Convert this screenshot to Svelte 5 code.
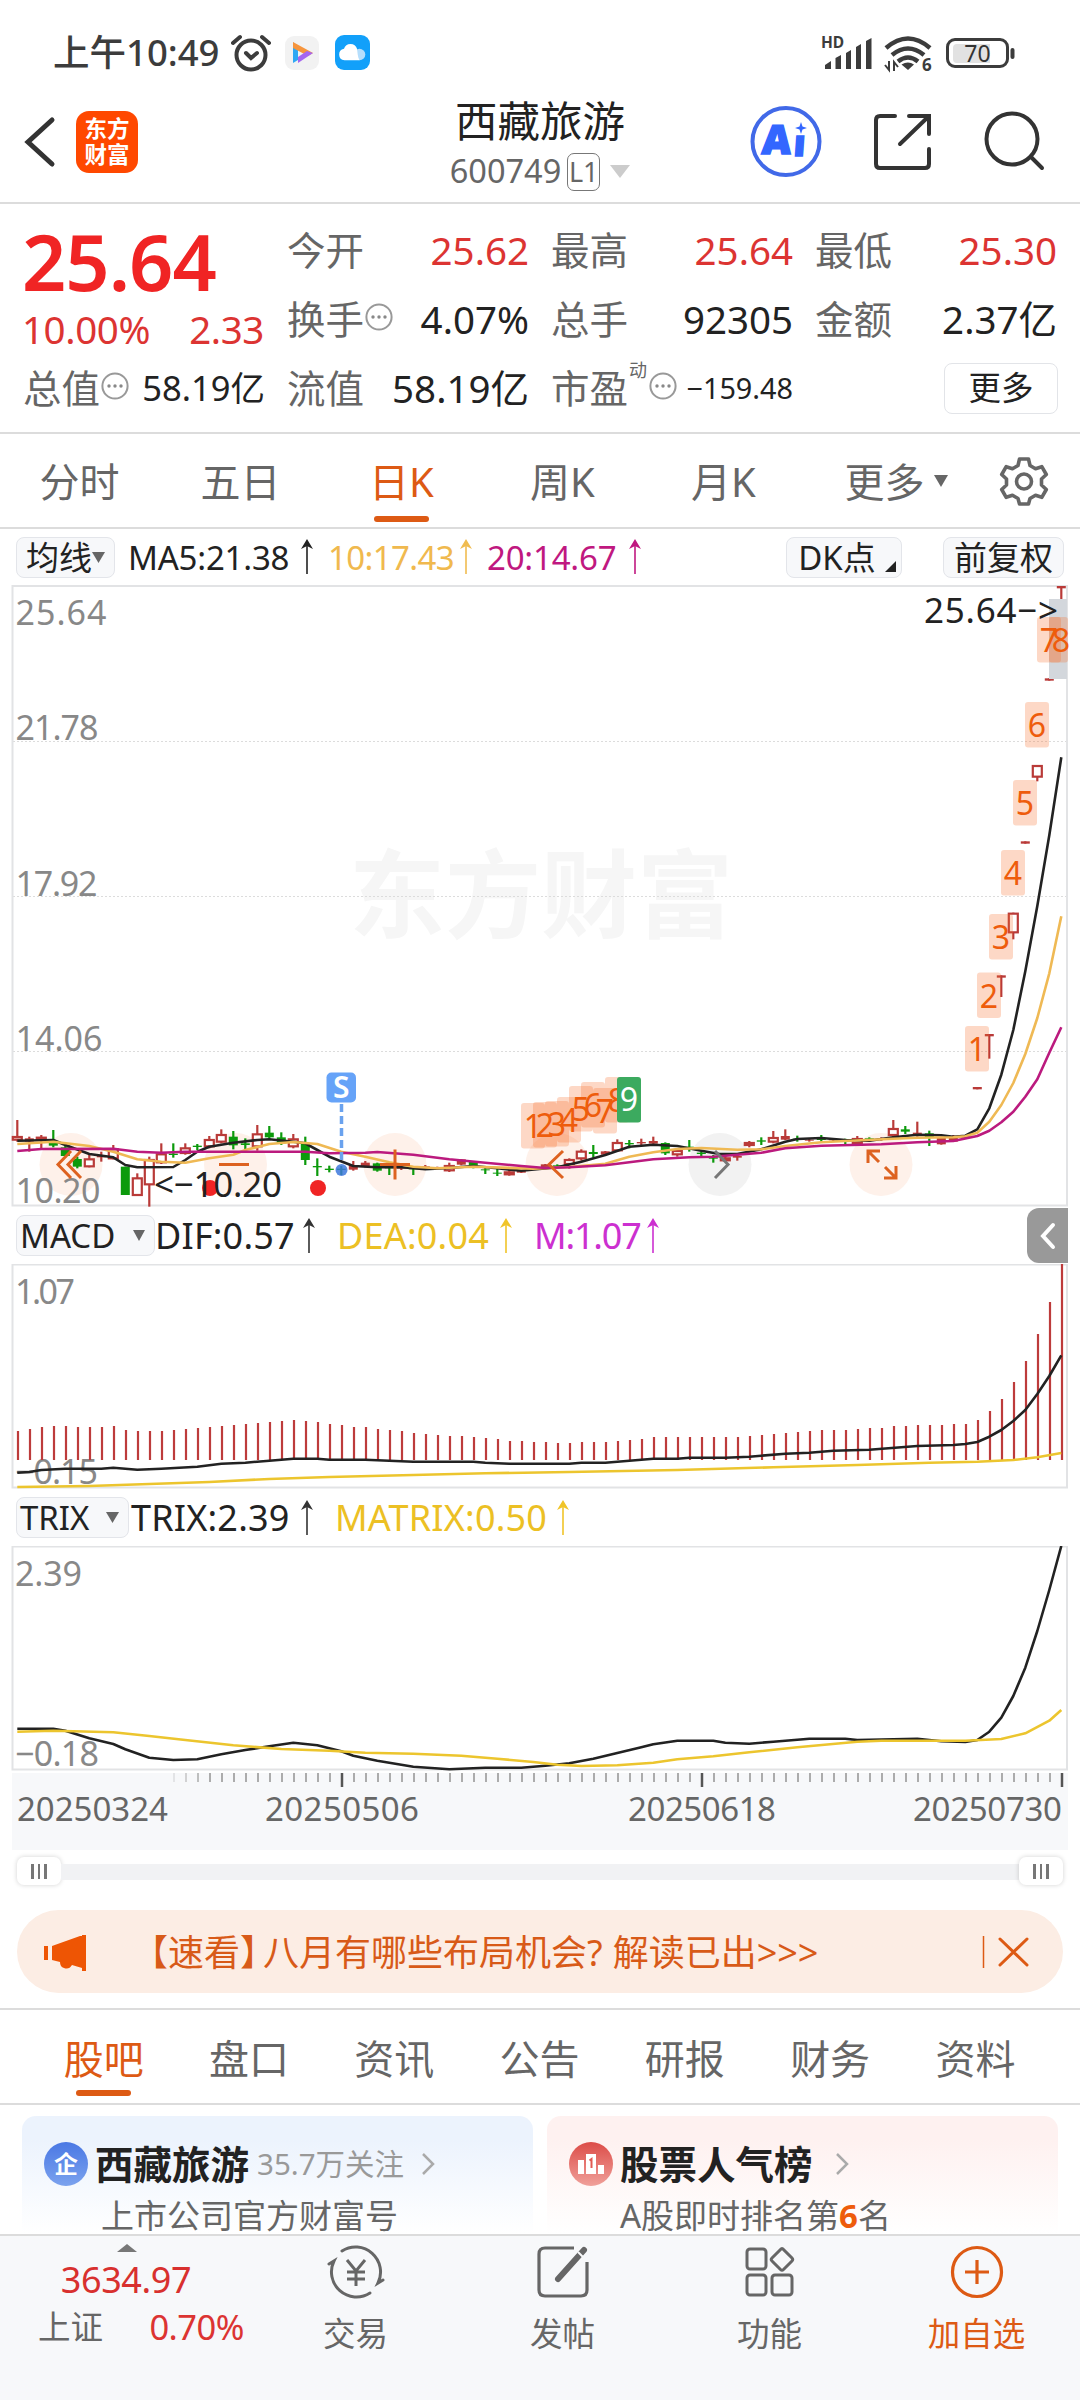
<script>
	const tabs = ["分时", "五日", "日K", "周K", "月K"];
	const infoTabs = ["股吧", "盘口", "资讯", "公告", "研报", "财务", "资料"];

	const quotes = [
		{ label: "今开", value: "25.62", up: true },
		{ label: "最高", value: "25.64", up: true },
		{ label: "最低", value: "25.30", up: true },
		{ label: "换手", value: "4.07%", tip: true },
		{ label: "总手", value: "92305" },
		{ label: "金额", value: "2.37亿" },
	];

	// one bar every 12px
	const bx = (i) => 17.3 + i * 12;
	const line = (pts, fy) => pts.map(([i, v]) => `${bx(i).toFixed(1)},${fy(v).toFixed(1)}`).join(" ");

	const ky = (v) => 1060 + v / 3;
	const macdY = (v) => 1200 + v / 3;
	const trixY = (v) => 1490 + v / 3;

	// [index, kind, high, top, bottom, low]  r = hollow red, R = solid red, g = green
	const candles = [
		[0, "r", 180, 228, 242, 245], [1, "R", 230, 235, 245, 275], [2, "r", 225, 230, 238, 265],
		[3, "g", 210, 247, 257, 262], [4, "g", 255, 262, 288, 292], [5, "g", 290, 297, 320, 325],
		[6, "r", 285, 295, 322, 322], [7, "R", 275, 288, 292, 305], [8, "r", 255, 265, 298, 298],
		[9, "g", 320, 320, 405, 405], [10, "r", 340, 352, 408, 408], [11, "r", 290, 297, 376, 440],
		[12, "r", 250, 280, 310, 312], [13, "g", 250, 281, 285, 293], [14, "r", 250, 262, 282, 284],
		[15, "g", 252, 257, 261, 270], [16, "r", 228, 237, 262, 265], [17, "r", 208, 222, 248, 250],
		[18, "g", 213, 230, 256, 268], [19, "g", 235, 250, 255, 270], [20, "r", 195, 220, 262, 272],
		[21, "g", 198, 218, 232, 240], [22, "g", 217, 232, 250, 255], [23, "r", 222, 235, 262, 265],
		[24, "g", 230, 250, 300, 315], [25, "g", 295, 318, 322, 348], [26, "g", 317, 326, 330, 337],
		[27, "g", 318, 326, 330, 345], [28, "R", 303, 315, 329, 332], [29, "R", 303, 308, 320, 322],
		[30, "g", 308, 310, 332, 335], [31, "g", 312, 318, 325, 345], [32, "R", 318, 322, 326, 330],
		[33, "g", 318, 325, 328, 345], [34, "R", 315, 319, 323, 330], [35, "R", 320, 324, 327, 328],
		[36, "r", 308, 315, 334, 336], [37, "R", 298, 298, 314, 316], [38, "g", 303, 305, 322, 325],
		[39, "g", 320, 328, 331, 342], [40, "g", 325, 338, 341, 348], [41, "r", 328, 334, 345, 347],
		[42, "R", 330, 333, 338, 339], [43, "R", 322, 325, 329, 330], [44, "R", 312, 313, 321, 322],
		[45, "g", 313, 316, 319, 320], [46, "r", 295, 297, 315, 326], [47, "r", 268, 272, 298, 302],
		[48, "g", 255, 276, 282, 293], [49, "R", 273, 274, 284, 288], [50, "r", 238, 246, 274, 276],
		[51, "g", 240, 249, 253, 265], [52, "R", 236, 246, 250, 258], [53, "R", 230, 243, 251, 252],
		[54, "g", 247, 249, 280, 285], [55, "r", 265, 270, 286, 290], [56, "g", 240, 260, 263, 275],
		[57, "g", 275, 278, 282, 288], [58, "g", 285, 292, 296, 308], [59, "r", 285, 292, 302, 305],
		[60, "R", 280, 288, 293, 302], [61, "r", 243, 246, 258, 262], [62, "g", 232, 241, 245, 255],
		[63, "r", 213, 231, 248, 250], [64, "R", 208, 228, 239, 240], [65, "g", 227, 236, 239, 245],
		[66, "R", 236, 239, 242, 245], [67, "g", 225, 237, 240, 245], [68, "R", 235, 238, 241, 243],
		[69, "g", 236, 242, 246, 255], [70, "r", 228, 234, 252, 255], [71, "g", 232, 235, 240, 246],
		[72, "R", 232, 236, 240, 242], [73, "r", 180, 204, 228, 232], [74, "g", 198, 208, 215, 222],
		[75, "R", 185, 218, 222, 230], [76, "g", 212, 220, 232, 258], [77, "R", 230, 233, 253, 254],
		[78, "R", 225, 228, 245, 246], [79, "R", 227, 229, 233, 234], [80, "R", 81, 81, 88, 88],
		[81, "R", -78, -78, -71, -4], [82, "R", -254, -254, -247, -189], [83, "r", -442, -442, -380, -362],
		[84, "R", -656, -656, -649, -649], [85, "r", -885, -885, -847, -836], [86, "R", -1145, -1145, -1138, -1138],
		[87, "R", -1422, -1422, -1415, -1380],
	];

	const ma5 = [
		[0, 242], [3, 240], [4, 255], [6, 282], [8, 292], [9, 315], [10, 322], [13, 321], [14, 300], [15, 275],
		[16, 260], [18, 248], [20, 240], [21, 238], [23, 245], [24, 250], [25, 270], [26, 290], [28, 318], [30, 322],
		[32, 322], [34, 328], [36, 324], [38, 318], [40, 325], [42, 332], [45, 322], [47, 305], [49, 285], [51, 260],
		[53, 254], [55, 258], [57, 272], [58.5, 282], [60, 282], [62, 268], [64, 245], [65, 237], [67, 234], [69, 240],
		[71, 242], [73, 232], [75, 224], [77, 226], [78, 230], [79, 227], [80, 208], [81, 145], [82, 44], [83, -90],
		[84, -266], [85, -462], [86, -674], [87, -908],
	];
	const ma10 = [
		[0, 252], [3, 245], [6, 258], [8, 275], [10, 298], [12, 305], [14, 308], [16, 295], [18, 284], [19, 270],
		[21, 252], [23, 246], [25, 252], [27, 275], [29, 290], [31, 307], [33, 320], [35, 325], [38, 320], [43, 326],
		[46, 321], [49, 311], [51, 290], [53, 277], [55, 267], [57, 264], [60, 269], [62, 268], [64, 258], [67, 247],
		[69, 243], [73, 236], [75, 233], [78, 232], [79, 229], [80, 218], [81, 185], [82, 135], [83, 69], [84, -18],
		[85, -126], [86, -260], [87, -431],
	];
	const ma20 = [
		[0, 273], [2, 267], [8, 266], [10, 275], [12, 278], [14, 275], [24, 275], [26, 280], [29, 278], [30, 276],
		[33, 284], [36, 298], [39, 308], [42, 318], [44, 324], [46, 322], [49, 316], [51, 307], [53, 298], [56, 292],
		[58, 290], [62, 278], [64, 265], [67, 257], [72, 253], [75, 247], [78, 243], [80, 228], [81, 212], [82, 187],
		[83, 155], [84, 110], [85, 58], [86, -22], [87, -98],
	];

	const macdTops = [
		693, 687, 681, 678, 678, 681, 681, 681, 678, 690, 693, 693, 693, 690, 687, 684, 681, 678, 675, 672, 669, 666,
		663, 660, 663, 666, 672, 675, 681, 681, 687, 690, 693, 699, 702, 705, 708, 708, 711, 714, 717, 723, 723, 726,
		726, 729, 729, 726, 726, 726, 723, 720, 717, 711, 711, 711, 711, 711, 711, 711, 711, 708, 705, 702, 699, 696,
		693, 690, 690, 690, 687, 684, 684, 678, 678, 675, 675, 675, 672, 672, 660, 633, 597, 546, 483, 402, 306, 192,
	];
	const dif = [
		[0, 818], [1, 816], [2, 810], [4, 806], [7, 806], [8, 803], [10, 809], [12, 806], [15, 800], [17, 791],
		[19, 788], [21, 782], [23, 776], [25, 776], [26, 779], [29, 779], [33, 785], [38, 785], [39, 788], [41, 791],
		[46, 791], [47, 788], [49, 788], [52, 779], [53, 776], [55, 776], [56, 773], [59, 773], [61, 770], [64, 761],
		[66, 758], [68, 752], [71, 749], [75, 738], [78, 735], [79, 732], [80, 726], [81, 710], [82, 690], [83, 663],
		[84, 630], [85, 582], [86, 528], [87, 466],
	];
	const dea = [
		[0, 861], [6, 858], [11, 852], [16, 846], [21, 837], [26, 831], [33, 825], [39, 820], [46, 816], [55, 810],
		[63, 802], [70, 795], [76, 788], [80, 785], [83, 780], [85, 772], [87, 759],
	];
	const trix = [
		[0, 716], [3, 716], [4, 722], [6, 745], [8, 762], [9, 778], [11, 803], [13, 810], [15, 808], [17, 793],
		[19, 780], [21, 769], [23, 758], [25, 766], [27, 784], [28, 797], [30, 812], [33, 830], [36, 838], [38, 835],
		[39, 833], [42, 833], [44, 827], [46, 820], [48, 806], [50, 789], [52, 772], [53, 763], [55, 752], [58, 752],
		[59, 758], [61, 761], [63, 755], [66, 746], [69, 746], [70, 750], [73, 748], [75, 746], [77, 754], [79, 756],
		[80, 750], [81, 725], [82, 683], [83, 618], [84, 533], [85, 423], [86, 300], [87, 168],
	];
	const matrix = [
		[0, 725], [3, 722], [8, 727], [11, 738], [14, 750], [18, 766], [22, 777], [26, 782], [29, 788], [33, 791],
		[37, 797], [40, 806], [43, 816], [45, 824], [47, 828], [50, 826], [53, 818], [55, 808], [58, 799], [61, 787],
		[65, 772], [70, 755], [72, 752], [79, 752], [82, 747], [84, 730], [86, 692], [87, 660],
	];

	// 九转序列
	const marks = [
		[521, 1103, 1], [533, 1102, 2], [545, 1101, 3], [557, 1097, 4], [569, 1086, 5], [581, 1082, 6], [593, 1088, 7],
		[605, 1077, 8], [965, 1026, 1], [977, 972.5, 2], [989, 914, 3], [1001, 850, 4], [1013, 780, 5], [1025, 702, 6],
		[1037, 617, 7], [1049, 617, 8],
	];

	const priceLabels = [[625, "25.64", 91], [740, "21.78", 83], [896, "17.92", 82], [1051, "14.06", 87], [1203, "10.20", 85]];
	const ticks = Array.from({ length: 75 }, (_, k) => k + 13);
</script>

{#snippet tip()}
	<svg class="tip" width="28" height="28" viewBox="0 0 28 28">
		<circle cx="14" cy="14" r="12.6" fill="none" stroke="#999" stroke-width="2" />
		<g fill="#888"><circle cx="8" cy="14" r="1.7" /><circle cx="14" cy="14" r="1.7" /><circle cx="20" cy="14" r="1.7" /></g>
	</svg>
{/snippet}

{#snippet arrow(color)}
	<svg class="arrow" width="14" height="36" viewBox="0 0 14 36" style:color>
		<path d="M7 35V5" stroke="currentColor" stroke-width="1.6" fill="none" />
		<path d="M7 0l6 10-6-3-6 3z" fill="currentColor" />
	</svg>
{/snippet}

{#snippet caret(w, h)}
	<svg class="caret" width={w} height={h} viewBox="0 0 10 10" preserveAspectRatio="none"><path d="M0 0h10L5 10z" fill="currentColor" /></svg>
{/snippet}

<div class="page">
	<div class="status">
		<span class="time">上午10:49</span>
		<svg class="alarm" width="40" height="38" viewBox="0 0 40 38" fill="none" stroke="#3c3c3c" stroke-width="4" stroke-linecap="round">
			<circle cx="20" cy="21" r="14.5" />
			<path d="M15 19l5 5 6-5M2 9l7-6M38 9l-7-6" />
		</svg>
		<svg class="app" width="34" height="34" viewBox="0 0 34 34">
			<rect width="34" height="34" rx="9" fill="#f2f2f2" />
			<path d="M8 6v21l5-3V14z" fill="#2fa8f4" />
			<path d="M8 6l20 11-5 3L8 12z" fill="#f6953d" />
			<path d="M28 17L13 27v-6l9-6z" fill="#a566f0" />
		</svg>
		<svg class="app" width="35" height="35" viewBox="0 0 35 35">
			<rect width="35" height="35" rx="9" fill="#12a0fa" />
			<circle cx="24.500" cy="19.500" r="5.800" fill="#b5defc" />
			<path d="M9.500 25.300a5.800 5.800 0 0 1-.5-11.500 6.800 6.800 0 0 1 13 0c.5 3 .5 8 2.500 11.500z" fill="#fff" />
		</svg>
		<svg class="signal" width="200" height="44" viewBox="820 30 200 44">
			<g fill="#3c3c3c">
				<path d="M825 68v-4l6-4v8zM835.500 68V57l5.500-3v14zM846 68V52l5-3v19zM856 68V46l5-3v25zM866 68V40l5.500-3v31z" />
				<path d="M901.500 63.500l6.500 5.500 6-5.500q-6-4-12.500 0z" />
				<rect x="1010.500" y="47" width="4" height="11" rx="2" />
			</g>
			<text x="821" y="47" font-size="15.500" font-weight="700" fill="#3c3c3c">HD</text>
			<text x="922" y="69.500" font-size="17" font-weight="700" fill="#3c3c3c">6</text>
			<g fill="none" stroke="#3c3c3c" stroke-width="4.500">
				<path d="M886 47q22-19 44 0M892 54q16-13 32 0M898 60.500q10-8 20 0" />
				<path d="M889 60v9l-4-5M894 70v-9l4 5" stroke-width="2" />
			</g>
			<rect x="947.500" y="38.500" width="60" height="27" rx="7.500" fill="#fff" stroke="#3c3c3c" stroke-width="3" />
			<path d="M957 43h33v19h-33q-4 0-4-4V47q0-4 4-4z" fill="#e2e2e2" />
			<text x="977.500" y="60.500" font-size="23" text-anchor="middle" fill="#333">70</text>
		</svg>
	</div>

	<div class="header">
		<svg class="back" width="36" height="54" viewBox="0 0 36 54"><path d="M30 5L6 27l24 22" fill="none" stroke="#333" stroke-width="5" stroke-linecap="round" /></svg>
		<div class="logo"><span>东方</span><span>财富</span></div>
		<div class="title">
			<div class="name">西藏旅游</div>
			<div class="code">600749<span class="level">L1</span><i>{@render caret(20, 13)}</i></div>
		</div>
		<svg class="tools" width="300" height="76" viewBox="746 104 300 76" fill="none" stroke="#333" stroke-width="4" stroke-linecap="round">
			<circle cx="786" cy="141.500" r="33.500" stroke="#4169e8" />
			<g font-weight="900" fill="#3366ff" stroke="#3366ff" stroke-width="1.500" transform="skewX(-4) translate(10 0)">
				<text x="762" y="154.500" font-size="40">A</text>
				<text x="794" y="156" font-size="36">ı</text>
			</g>
			<path d="M801 122l1.500 4.500 4.500 1.500-4.500 1.500-1.500 4.500-1.500-4.500-4.500-1.500 4.500-1.500z" fill="#3366ff" stroke="none" />
			<path d="M895 116h-15q-4 0-4 4v44q0 4 4 4h45q4 0 4-4v-15M909 116h20v18M928 117l-28 27" />
			<circle cx="1012" cy="139" r="25.500" />
			<path d="M1031 157l11 11" />
		</svg>
	</div>

	<div class="quote">
		<div class="last">
			<div class="price">25.64</div>
			<div class="change"><span>10.00%</span><span>2.33</span></div>
		</div>
		{#each quotes as q}
			<div class="cell">
				<span class="label">{q.label}</span>
				{#if q.tip}{@render tip()}{/if}
				<span class="value" class:up={q.up}>{q.value}</span>
			</div>
		{/each}
		<div class="cell">
			<span class="label">总值</span>{@render tip()}
			<span class="value mid">58.19亿</span>
		</div>
		<div class="cell">
			<span class="label">流值</span>
			<span class="value">58.19亿</span>
		</div>
		<div class="cell">
			<span class="label">市盈</span><sup>动</sup>{@render tip()}
			<span class="value small">−159.48</span>
		</div>
		<div class="cell"><span class="more">更多</span></div>
	</div>

	<div class="tabs">
		{#each tabs as tab}
			<div class="tab" class:active={tab === "日K"}>{tab}</div>
		{/each}
		<div class="tab pull">更多<i>{@render caret(14, 12)}</i></div>
		<svg class="gear" width="50" height="50" viewBox="0 0 50 50" fill="none" stroke="#666" stroke-width="3.600" stroke-linejoin="round">
			<path d="M20.500 3h9l1.500 6.500 5.500 3.200 6.300-2 4.500 7.800-4.800 4.500v6l4.800 4.500-4.500 7.800-6.300-2-5.500 3.200-1.500 5.500h-9L19 42.500l-5.500-3.200-6.300 2-4.500-7.800L7.500 29v-6l-4.800-4.500 4.500-7.800 6.300 2L19 9.500z" />
			<circle cx="25" cy="25.500" r="7.500" />
		</svg>
	</div>

	<div class="legend">
		<span class="btn ma">均线<i>{@render caret(13, 11)}</i></span>
		<span class="item" style:width="179px">MA5:21.38{@render arrow("#222")}</span>
		<span class="item gold" style:width="138px">10:17.43{@render arrow("#f0bc50")}</span>
		<span class="item pink" style:width="148px">20:14.67{@render arrow("#c01880")}</span>
		<span class="btn dk">DK点<b></b></span>
		<span class="btn fq">前复权</span>
	</div>

	<svg class="chart" width="1080" height="622" viewBox="0 585 1080 622">
		<text class="mark" x="541" y="930" text-anchor="middle">东方财富</text>
		<g stroke="#dcdcdc" stroke-width="1" stroke-dasharray="2 2">
			<path d="M13 741.500H1067M13 896.500H1067M13 1051.500H1067" />
		</g>
		<rect x="12.500" y="586" width="1054.500" height="619.500" fill="none" stroke="#e2e3e5" stroke-width="2" />

		{#each [71, 235.500, 395, 557, 720, 881] as cx, n}
			<circle {cx} cy="1164.500" r="31.500" fill={n === 4 ? "#f2f2f2" : "#fef1ea"} />
		{/each}

		{#each candles as [i, kind, hi, top, bottom, lo]}
			{@const color = kind === "g" ? "#0c9a0c" : "#b93a38"}
			<path d="M{bx(i)} {ky(hi)}V{ky(lo)}" stroke={color} stroke-width="2.200" />
			{#if kind === "r"}
				<rect x={bx(i) - 4.500} y={ky(top) + 1} width="9" height={Math.max(ky(bottom) - ky(top) - 2, 2)} fill="#fff" stroke={color} stroke-width="2.200" />
			{:else}
				<rect x={bx(i) - 4.500} y={ky(top)} width="9" height={ky(bottom) - ky(top)} fill={color} />
			{/if}
		{/each}
		<circle cx="210" cy="1188" r="8" fill="#f02424" />
		<circle cx="318" cy="1188" r="8" fill="#f02424" />

		{#each priceLabels as [y, text, len]}
			<text class="axis" x="15.500" {y} textLength={len}>{text}</text>
		{/each}
		<g class="tag">
			<text x="154" y="1197" textLength="128">&lt;−10.20</text>
		</g>

		<g fill="none" stroke-width="2.600" stroke-linejoin="round">
			<polyline points={line(ma5, ky)} stroke="#222" />
			<polyline points={line(ma10, ky)} stroke="#efb954" />
			<polyline points={line(ma20, ky)} stroke="#bb1a7e" />
		</g>

		<g fill="none" stroke="#dd6220" stroke-width="3">
			<path d="M71 1151l-13 13.500 13 13.500M81 1151l-13 13.500 13 13.500M219 1164.500h30M380 1164.500h30M395 1149.500v30M563 1151l-14 13.500 14 13.500" />
			<path d="M880 1151h-12v12M868 1151l11 11M896 1166v12h-12M896 1178l-11-11" />
			<path d="M715 1151l13 13.500-13 13.500" stroke="#777" />
		</g>

		<path d="M341.500 1104V1160" stroke="#6aa2ee" stroke-width="3.500" stroke-dasharray="8 4" />
		<circle cx="341.500" cy="1170" r="6" fill="#3d78dc" opacity="0.850" />
		<rect x="326.500" y="1072.500" width="29.500" height="30" rx="5" fill="#66a3f8" />
		<text x="341.300" y="1098" font-size="30" font-weight="600" fill="#fff" text-anchor="middle">S</text>

		<rect x="1049" y="599" width="18" height="80" fill="#d3d7dc" />
		<g class="nine">
			{#each marks as [x, y, n]}
				<rect {x} {y} width={x === 1049 ? 19 : 24} height="45.500" rx="3" fill="#f8702c" fill-opacity="0.270" />
			{/each}
			{#each marks as [x, y, n]}
				<text x={x + 12} y={y + 35} text-anchor="middle" fill="#ee5c0c">{n}</text>
			{/each}
			<rect x="617" y="1077" width="24" height="45.500" rx="3" fill="#3caa5f" />
			<text x="629" y="1111" text-anchor="middle" fill="#fff">9</text>
		</g>
		<g class="tag">
			<text x="924" y="622.500" textLength="134">25.64−&gt;</text>
		</g>
	</svg>

	<div class="legend sub">
		<span class="btn macd">MACD<i>{@render caret(12, 11)}</i></span>
		<span class="item" style:width="154px">DIF:0.57{@render arrow("#333")}</span>
		<span class="item yellow" style:width="169px">DEA:0.04{@render arrow("#f0c428")}</span>
		<span class="item violet" style:width="119px">M:1.07{@render arrow("#cc30d0")}</span>
		<span class="drawer"><svg width="18" height="28" viewBox="0 0 18 28"><path d="M14 3L4 14l10 11" fill="none" stroke="#fff" stroke-width="4" stroke-linecap="round" /></svg></span>
	</div>

	<svg class="chart" width="1080" height="225" viewBox="0 1264 1080 225">
		<rect x="12.500" y="1264.500" width="1054.500" height="223" fill="none" stroke="#e2e3e5" stroke-width="2" />
		<text class="axis" x="15" y="1304" textLength="60">1.07</text>
		<text class="axis" x="15" y="1484" textLength="83">−0.15</text>
		{#each macdTops as top, i}
			<path d="M{bx(i) + 0.700} 1460V{macdY(top)}" stroke="#bd3b3b" stroke-width="2.200" />
		{/each}
		<g fill="none" stroke-width="2.600" stroke-linejoin="round">
			<polyline points={line(dif, macdY)} stroke="#222" />
			<polyline points={line(dea, macdY)} stroke="#ecc52e" />
		</g>
	</svg>

	<div class="legend sub low">
		<span class="btn trix">TRIX<i>{@render caret(13, 11)}</i></span>
		<span class="item" style:width="176px">TRIX:2.39{@render arrow("#333")}</span>
		<span class="item yellow" style:width="228px">MATRIX:0.50{@render arrow("#f0c428")}</span>
	</div>

	<svg class="chart" width="1080" height="304" viewBox="0 1546 1080 304">
		<rect x="12.500" y="1546.500" width="1054.500" height="223" fill="none" stroke="#e2e3e5" stroke-width="2" />
		<text class="axis" x="15" y="1586" textLength="67">2.39</text>
		<text class="axis" x="15" y="1766" textLength="84">−0.18</text>
		<g fill="none" stroke-width="2.600" stroke-linejoin="round">
			<polyline points={line(trix, trixY)} stroke="#222" />
			<polyline points={line(matrix, trixY)} stroke="#ecc52e" />
		</g>
		<rect x="12" y="1773" width="1056" height="77" fill="#f7f8fa" />
		{#each ticks as i}
			{#if i % 30 === 27}
				<path d="M{bx(i) + 0.700} 1773V1787" stroke="#555" stroke-width="2.500" />
			{:else}
				<path d="M{bx(i) + 0.700} 1773V1782" stroke="#999" stroke-width="1.600" opacity={Math.min(1, (i - 12) / 4)} />
			{/if}
		{/each}
		<g class="date">
			<text x="17" y="1820.500" textLength="151">20250324</text>
			<text x="265" y="1820.500" textLength="154">20250506</text>
			<text x="628" y="1820.500" textLength="148">20250618</text>
			<text x="913" y="1820.500" textLength="149">20250730</text>
		</g>
	</svg>

	<div class="slider">
		<span class="knob"><b></b><b></b><b></b></span>
		<span class="track"></span>
		<span class="knob"><b></b><b></b><b></b></span>
	</div>

	<div class="notice">
		<svg class="horn" width="42" height="36" viewBox="0 0 42 36" fill="#ee5504">
			<path d="M0 11h4v14H0zM8 11L36 1h2v-1h4v36h-4v-3l-10-3q-3 5-8 3-4-1-4-6l-8-2z" />
		</svg>
		<span class="msg"><em>【速看】</em><span>八月有哪些布局机会?</span><span>解读已出&gt;&gt;&gt;</span></span>
		<svg class="close" width="50" height="34" viewBox="0 0 50 34" fill="none" stroke="#dd5a14">
			<path d="M1.500 1v32" stroke-width="1.500" />
			<path d="M18 4l27 26M45 4L18 30" stroke-width="3" stroke-linecap="round" />
		</svg>
	</div>

	<div class="info-tabs">
		{#each infoTabs as tab, i}
			<div class="tab" class:active={i === 0}>{tab}</div>
		{/each}
	</div>

	<div class="cards">
		<div class="card blue">
			<div class="row">
				<span class="badge">企</span>
				<strong>西藏旅游</strong>
				<span class="fans">35.7万关注</span>
				<svg width="14" height="24" viewBox="0 0 14 24"><path d="M2 2l10 10L2 22" fill="none" stroke="#aaa" stroke-width="2.500" /></svg>
			</div>
			<div class="desc">上市公司官方财富号</div>
		</div>
		<div class="card red">
			<div class="row">
				<span class="badge">
					<svg width="28" height="24" viewBox="0 0 28 24" fill="#fff"><path d="M1 8h6v14H1zM9 2h10v20H9zM21 13h6v9h-6z" /><path d="M12.500 8.500l2-1.500v9" stroke="#e25a52" stroke-width="2" fill="none" /></svg>
				</span>
				<strong>股票人气榜</strong>
				<svg class="far" width="14" height="24" viewBox="0 0 14 24"><path d="M2 2l10 10L2 22" fill="none" stroke="#aaa" stroke-width="2.500" /></svg>
			</div>
			<div class="desc">A股即时排名第<em>6</em>名</div>
		</div>
	</div>

	<div class="bottom">
		<div class="index">
			<svg width="20" height="8" viewBox="0 0 20 8"><path d="M0 8L10 0l10 8z" fill="#777" /></svg>
			<div class="point">3634.97</div>
			<div class="rate"><span>上证</span><span class="up">0.70%</span></div>
		</div>
		<div class="nav">
			<svg width="62" height="56" viewBox="0 0 62 56" fill="none" stroke="#666" stroke-width="3">
				<path d="M17 7a25 25 0 0 1 36 32l5-3M45 49A25 25 0 0 1 9 17l-5 3" stroke-linecap="round" />
				<path d="M22 16l9 11 9-11M31 27v15M22 28h18M22 35h18" />
			</svg>
			<span>交易</span>
		</div>
		<div class="nav">
			<svg width="56" height="56" viewBox="0 0 56 56" fill="none" stroke="#666" stroke-width="3.200">
				<path d="M39 4H10q-6 0-6 6v36q0 6 6 6h36q6 0 6-6V18" />
				<path d="M49 6L23 35" stroke-width="6" stroke-linecap="round" />
				<path d="M43 8l6 6" stroke="#f7f8fa" stroke-width="2" />
			</svg>
			<span>发帖</span>
		</div>
		<div class="nav">
			<svg width="52" height="56" viewBox="0 0 52 56" fill="none" stroke="#666" stroke-width="3">
				<rect x="3" y="5" width="19" height="20" rx="3" />
				<rect x="3" y="31" width="19" height="20" rx="3" />
				<rect x="28" y="31" width="20" height="20" rx="3" />
				<path d="M36.500 5.500q1.500-2 3 0l8.500 8.500q1.500 1.500 0 3l-8.500 8.500q-1.500 1.500-3 0L28 17q-1.500-1.500 0-3z" />
			</svg>
			<span>功能</span>
		</div>
		<div class="nav add">
			<svg width="56" height="56" viewBox="0 0 56 56" fill="none" stroke="#dd5a14" stroke-width="3.200">
				<circle cx="28" cy="28" r="24.500" />
				<path d="M28 16v24M16 28h24" />
			</svg>
			<span>加自选</span>
		</div>
	</div>
</div>

<style>
	:global(body) {
		margin: 0;
		background: #fff;
	}

	.page {
		width: 1080px;
		height: 2400px;
		overflow: hidden;
		display: flex;
		flex-direction: column;
		background: #fff;
		color: #222;
		font-family: "Noto Sans", "Noto Sans CJK SC", sans-serif;
		line-height: 1;
	}

	.page > * {
		flex: none;
		box-sizing: border-box;
	}

	svg {
		display: block;
		flex: none;
	}

	i {
		display: inline-flex;
		font-style: normal;
	}

	em {
		font-style: normal;
	}

	.status {
		height: 96px;
		display: flex;
		align-items: center;
		padding: 9px 60px 0 53px;
		color: #3c3c3c;
	}

	.time {
		width: 171px;
		font-size: 36.5px;
		font-weight: 500;
		white-space: nowrap;
	}

	.alarm {
		margin-left: 7px;
		margin-right: 14px;
	}

	.app {
		margin-right: 16px;
	}

	.signal {
		margin-left: auto;
	}

	.header {
		height: 108px;
		display: flex;
		align-items: center;
		border-bottom: 2px solid #dcdcdc;
		padding: 0 34px 14px 22px;
	}

	.logo {
		width: 62px;
		height: 62px;
		margin-left: 18px;
		border-radius: 13px;
		background: #ff4800;
		color: #fff;
		font-size: 22.5px;
		font-weight: 700;
		display: flex;
		flex-direction: column;
		align-items: center;
		justify-content: center;
		gap: 3px;
	}

	.title {
		width: 300px;
		margin-left: 252px;
		height: 97px;
		text-align: center;
	}

	.name {
		font-size: 42.5px;
		line-height: 54px;
	}

	.code {
		display: flex;
		justify-content: center;
		align-items: center;
		height: 48px;
		font-size: 32.5px;
		color: #666;
	}

	.code i {
		margin-left: 10px;
		color: #ccc;
	}

	.level {
		margin-left: 6px;
		width: 31px;
		height: 36px;
		line-height: 36px;
		border: 1.5px solid #777;
		border-radius: 7px;
		font-size: 27px;
	}

	.tools {
		margin-left: auto;
	}

	.quote {
		height: 230px;
		padding: 12px 24px 0 25px;
		display: grid;
		grid-template-columns: repeat(4, 239px);
		grid-template-rows: repeat(3, 69px);
		column-gap: 25px;
		border-bottom: 2px solid #dcdcdc;
	}

	.last {
		grid-row: span 2;
		color: #dc3432;
	}

	.price {
		font-size: 77.5px;
		font-weight: 600;
		color: #f02424;
		letter-spacing: -1px;
		line-height: 90px;
		margin-left: -3px;
	}

	.change {
		display: flex;
		justify-content: space-between;
		margin-left: -3px;
		font-size: 38.5px;
		line-height: 46px;
		letter-spacing: -0.4px;
	}

	.cell {
		display: flex;
		align-items: center;
	}

	.label {
		font-size: 38.5px;
		color: #666;
		margin-left: -2px;
	}

	.tip {
		margin-left: 1px;
		margin-top: -6px;
	}

	.value {
		margin-left: auto;
		margin-right: -1px;
		font-size: 38.5px;
	}

	.value.mid {
		font-size: 34.5px;
	}

	.value.small {
		font-size: 28.8px;
	}

	.up {
		color: #dc3432;
	}

	sup {
		font-size: 18px;
		color: #666;
		line-height: 1;
		align-self: flex-start;
		margin-top: 7px;
		margin-left: 1px;
		margin-right: 1px;
	}

	.more {
		margin-left: auto;
		margin-right: -2px;
		width: 112px;
		height: 49px;
		border: 1.5px solid #e2e4e8;
		border-radius: 8px;
		font-size: 32.5px;
		line-height: 48px;
		text-align: center;
	}

	.tabs {
		height: 95px;
		display: flex;
		align-items: stretch;
		border-bottom: 2px solid #dcdcdc;
	}

	.tab {
		width: 161px;
		font-size: 40px;
		line-height: 96px;
		color: #666;
		text-align: center;
		position: relative;
	}

	.tabs .tab:first-child {
		margin-left: -1px;
	}

	.tab.active {
		color: #dd5a14;
	}

	.tab.active::after {
		content: "";
		position: absolute;
		left: 50%;
		bottom: 5px;
		width: 55px;
		height: 6px;
		margin-left: -27.5px;
		border-radius: 3px;
		background: #dd5a14;
	}

	.tabs .pull {
		width: 184px;
	}

	.pull i {
		margin-left: 9px;
		vertical-align: 10px;
	}

	.gear {
		margin: 22px 0 0 11px;
	}

	.legend {
		height: 56px;
		padding: 0 16px;
		display: flex;
		align-items: center;
		font-size: 33px;
	}

	.legend.sub {
		height: 57px;
		padding-right: 12px;
		font-size: 36px;
	}

	.btn {
		height: 41px;
		box-sizing: border-box;
		border: 1.5px solid #e3e5ea;
		border-radius: 8px;
		background: #f7f8fa;
		display: flex;
		align-items: center;
		justify-content: center;
		white-space: nowrap;
	}

	.btn i {
		color: #666;
	}

	.item {
		display: flex;
		align-items: center;
		justify-content: space-between;
		white-space: nowrap;
		margin-right: 21px;
		letter-spacing: -0.2px;
	}

	.item.gold {
		letter-spacing: -0.6px;
	}

	.arrow {
		margin-right: -7px;
	}

	.ma {
		width: 99px;
		margin-right: 13px;
	}

	.dk {
		width: 116px;
		margin-left: auto;
		margin-right: 41px;
		position: relative;
		padding-right: 14px;
	}

	.dk b {
		position: absolute;
		right: 5px;
		bottom: 5px;
		border-left: 11px solid transparent;
		border-bottom: 11px solid #222;
	}

	.fq {
		width: 121px;
	}

	.gold {
		color: #f0b94e;
	}

	.pink {
		color: #c01880;
	}

	.yellow {
		color: #ecc024;
	}

	.violet {
		color: #cc30d0;
	}

	.macd,
	.trix {
		justify-content: space-between;
		padding: 0 9px 0 3px;
		margin-right: 0;
		font-size: 33px;
	}

	.macd {
		width: 139px;
	}

	.trix {
		width: 113px;
		margin-right: 2px;
	}

	.sub .item {
		margin-right: 28px;
		letter-spacing: 0.2px;
	}

	.sub .violet {
		letter-spacing: -1.2px;
	}

	.drawer {
		margin-left: auto;
		width: 41px;
		height: 55px;
		border-radius: 12px 0 0 12px;
		background: #999;
		display: flex;
		align-items: center;
		justify-content: center;
	}

	.axis {
		font-size: 34px;
		fill: #888;
	}

	.mark {
		font-size: 96px;
		font-weight: 700;
		fill: #f6f6f6;
	}

	.tag {
		font-size: 35px;
		fill: #222;
	}

	.nine {
		font-size: 32px;
	}

	.date {
		font-size: 33px;
		fill: #666;
	}

	.slider {
		height: 60px;
		padding: 7px 17px 0;
		display: flex;
		align-items: flex-start;
	}

	.track {
		flex: 1;
		height: 16px;
		margin-top: 7px;
		background: #f1f2f4;
	}

	.knob {
		width: 44px;
		height: 28px;
		border-radius: 7px;
		background: #fff;
		box-shadow: 0 0 5px rgba(0, 0, 0, 0.18);
		display: flex;
		align-items: center;
		justify-content: center;
		gap: 4px;
	}

	.knob b {
		width: 2.5px;
		height: 15px;
		background: #777;
	}

	.notice {
		height: 83px;
		margin: 0 17px;
		padding: 2px 31px 0 27px;
		border-radius: 42px;
		background: #fcede4;
		color: #d85a18;
		display: flex;
		align-items: center;
		font-size: 36px;
	}

	.msg {
		display: flex;
		align-items: center;
		margin-left: 46px;
		white-space: nowrap;
	}

	.msg em {
		margin-right: -13px;
	}

	.msg span + span {
		margin-left: 10px;
	}

	.close {
		margin-left: auto;
		margin-top: -2px;
	}

	.info-tabs {
		height: 97px;
		margin-top: 15px;
		padding-left: 31px;
		display: flex;
		border-top: 2px solid #dcdcdc;
		border-bottom: 2px solid #dcdcdc;
	}

	.info-tabs .tab {
		width: 145.3px;
		line-height: 98px;
	}

	.info-tabs .active::after {
		bottom: 7px;
	}

	.cards {
		height: 129px;
		padding: 11px 22px 0;
		display: flex;
		gap: 14px;
		overflow: hidden;
	}

	.card {
		flex: 1;
		border-radius: 14px 14px 0 0;
		padding: 22px 22px 0;
	}

	.card.blue {
		background: linear-gradient(#ecf3fd 20%, #fff);
	}

	.card.red {
		background: linear-gradient(#fef1f0 20%, #fff);
	}

	.row {
		display: flex;
		align-items: center;
		height: 52px;
		white-space: nowrap;
	}

	.badge {
		width: 44px;
		height: 44px;
		border-radius: 50%;
		background: linear-gradient(#4a78e4, #7ba2ee);
		color: #fff;
		font-size: 24px;
		font-weight: 700;
		display: flex;
		align-items: center;
		justify-content: center;
		margin-right: 7px;
	}

	.red .badge {
		background: linear-gradient(#dc4c48, #f0a09a);
	}

	strong {
		font-size: 38.5px;
		font-weight: 700;
	}

	.fans {
		margin: 0 17px 0 8px;
		font-size: 29.5px;
		color: #999;
	}

	.far {
		margin-left: 22px;
	}

	.desc {
		margin: 8px 0 0 57px;
		font-size: 33px;
		line-height: 36px;
		color: #666;
	}

	.red .desc {
		margin-left: 51px;
	}

	.desc em {
		color: #ee5c0c;
		font-weight: 700;
	}

	.bottom {
		height: 166px;
		display: flex;
		border-top: 2px solid #dcdcdc;
		background: #f7f8fa;
	}

	.index {
		width: 252px;
		padding-top: 8px;
		display: flex;
		flex-direction: column;
		align-items: center;
	}

	.index svg {
		margin-left: 1px;
	}

	.point {
		font-size: 36px;
		line-height: 56px;
		color: #d8302e;
		letter-spacing: -0.4px;
	}

	.rate {
		align-self: stretch;
		padding: 0 8px 0 38px;
		display: flex;
		justify-content: space-between;
		font-size: 32.5px;
		line-height: 37px;
		color: #666;
	}

	.rate .up {
		font-size: 34.5px;
		letter-spacing: -0.5px;
	}

	.nav {
		width: 207px;
		padding-top: 8px;
		display: flex;
		flex-direction: column;
		align-items: center;
		font-size: 32.5px;
		color: #666;
	}

	.nav span {
		margin-top: 14px;
		line-height: 40px;
	}

	.add {
		color: #dd5a14;
	}
</style>
